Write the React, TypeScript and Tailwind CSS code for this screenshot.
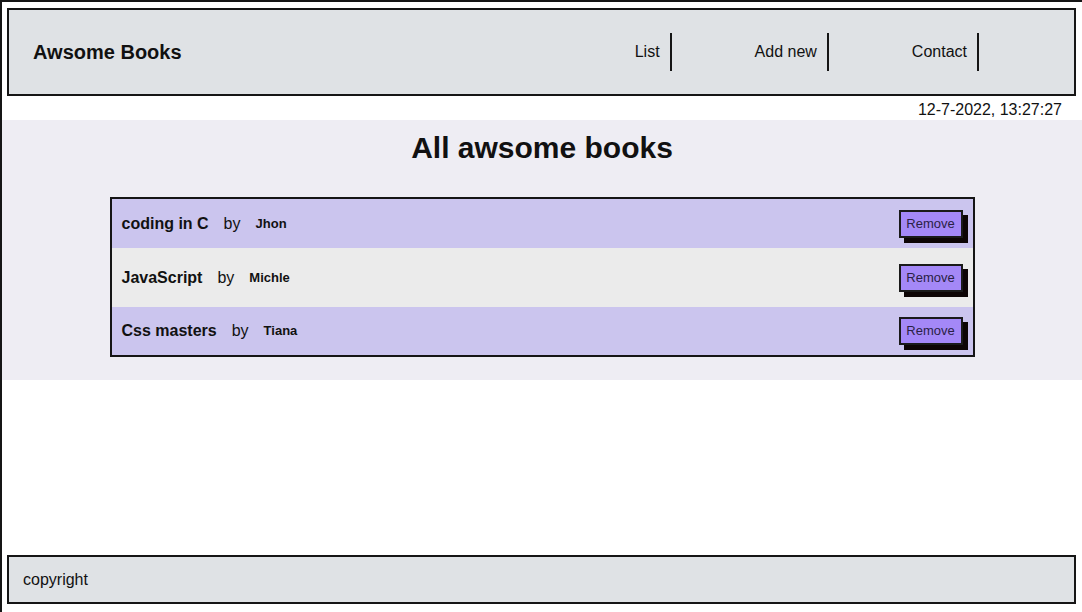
const books = [
  { title: 'coding in C', author: 'Jhon', bg: 'bg-[#cbc5ee]', h: 'h-[49px]' },
  { title: 'JavaScript', author: 'Michle', bg: 'bg-[#ebebeb]', h: 'h-[59px]' },
  { title: 'Css masters', author: 'Tiana', bg: 'bg-[#cbc5ee]', h: 'h-[48px]' },
]

const nav = ['List', 'Add new', 'Contact']

export default function App() {
  return (
    <div className="flex h-[612px] flex-col overflow-hidden border-l-2 border-t-2 border-[#151515] bg-white font-['Liberation_Sans',Arial,sans-serif] text-[#111]">
      <header className="ml-[5px] mr-[6px] mt-[6px] flex h-[88px] items-center justify-between border-2 border-[#151515] bg-[#dfe2e5] pl-[24px]">
        <h1 className="text-[20px] font-bold">Awsome Books</h1>
        <ul className="flex items-center gap-[83px] pr-[95px]">
          {nav.map((n) => (
            <li key={n} className="flex h-[38px] items-center border-r-2 border-[#151515] pr-[10px] text-[16px]">
              {n}
            </li>
          ))}
        </ul>
      </header>

      <div className="h-[24px] pr-[20px] pt-[4px] text-right text-[16px] leading-[20px]">12-7-2022, 13:27:27</div>

      <section className="bg-[#eeedf3] pb-[23px] pt-[11px]">
        <h2 className="text-center text-[30px] font-bold leading-[34px]">All awsome books</h2>
        <div className="mx-auto mt-[32px] w-[865px] border-2 border-[#151515]">
          {books.map((b) => (
            <div key={b.title} className={`flex items-center justify-between px-[10px] ${b.bg} ${b.h}`}>
              <div className="flex items-center gap-[15px]">
                <span className="text-[16px] font-bold">{b.title}</span>
                <span className="text-[16px]">by</span>
                <span className="text-[13px] font-bold">{b.author}</span>
              </div>
              <button className="h-[28px] w-[64px] border-2 border-[#1a1a1a] bg-[#a488f7] text-[13px] text-[#2a1f45] shadow-[5px_5px_0_#0d0505]">
                Remove
              </button>
            </div>
          ))}
        </div>
      </section>

      <footer className="mb-[8px] ml-[5px] mr-[6px] mt-auto flex h-[49px] items-center border-2 border-[#151515] bg-[#dfe2e5] pl-[14px] text-[16px]">
        copyright
      </footer>
    </div>
  )
}
